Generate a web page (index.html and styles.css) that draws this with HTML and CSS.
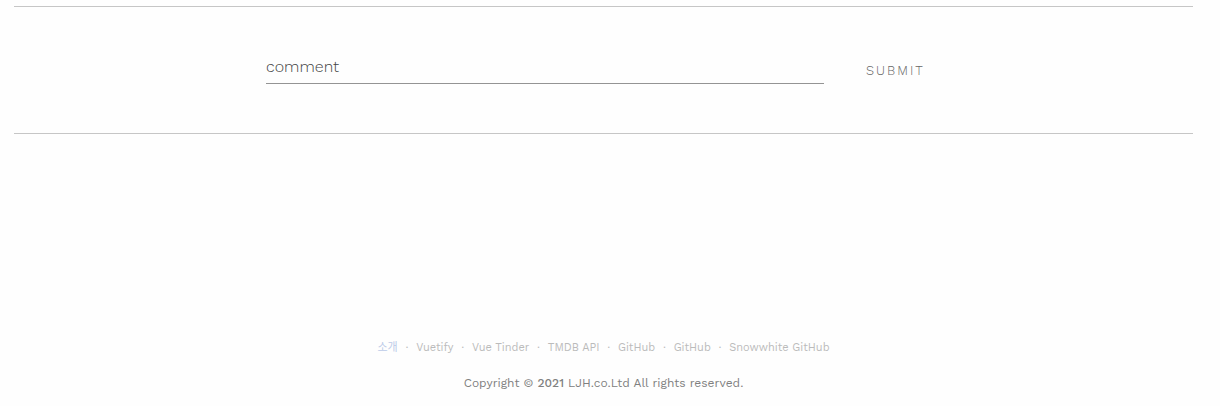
FILE: index.html
```html
<!DOCTYPE html>
<html lang="ko">
<head>
<meta charset="utf-8">
<meta name="viewport" content="width=device-width, initial-scale=1">
<title>Comments</title>
<link rel="stylesheet" href="styles.css">
</head>
<body>
<main class="comments">
<form class="comment-form">
<input class="comment-input" type="text" placeholder="comment" aria-label="comment">
<button class="submit" type="submit">SUBMIT</button>
</form>
</main>
<footer class="footer">
<nav class="links">
<a class="current" href="#">소개</a><span>·</span>
<a href="#">Vuetify</a><span>·</span>
<a href="#">Vue Tinder</a><span>·</span>
<a href="#">TMDB API</a><span>·</span>
<a href="#">GitHub</a><span>·</span>
<a href="#">GitHub</a><span>·</span>
<a href="#">Snowwhite GitHub</a>
</nav>
<p class="copyright">Copyright © <strong>2021</strong> LJH.co.Ltd All rights reserved.</p>
</footer>
</body>
</html>
```
FILE: styles.css
```css
* { box-sizing: border-box; }
body {
  margin: 0;
  padding: 6px 27px 15px 14px;
  min-height: 100vh;
  display: flex;
  flex-direction: column;
  justify-content: space-between;
  background: #fefefe;
  font-family: "Work Sans", Lato, "Noto Sans CJK KR", sans-serif;
}
.comments {
  border-top: 1px solid #c6c6c6;
  border-bottom: 1px solid #c6c6c6;
  padding: 43px 252px 49px;
}
.comment-form { display: flex; gap: 42px; }
.comment-input {
  flex: 1;
  min-width: 0;
  height: 34px;
  padding: 0;
  border: 0;
  border-bottom: 1px solid #949494;
  outline: 0;
  background: transparent;
  font: 300 16px "Work Sans", "Open Sans", sans-serif;
  color: #444;
}
.comment-input::placeholder { color: #444; opacity: 1; }
.submit {
  width: 75px;
  padding: 7px 0 0;
  border: 0;
  background: transparent;
  text-align: left;
  font: 300 13px "Work Sans", "Open Sans", sans-serif;
  letter-spacing: 2px;
  color: #666;
}
.footer { text-align: center; }
.links {
  display: flex;
  justify-content: center;
  gap: 8px;
  font-size: 11px;
  line-height: 16px;
  color: #bbb;
}
.links a { color: #bbb; text-decoration: none; }
.links .current { color: #bccbe8; }
.copyright {
  margin: 19px 0 0;
  font-size: 12px;
  line-height: 16px;
  color: #808080;
}
.copyright strong { font-weight: 500; }
```
